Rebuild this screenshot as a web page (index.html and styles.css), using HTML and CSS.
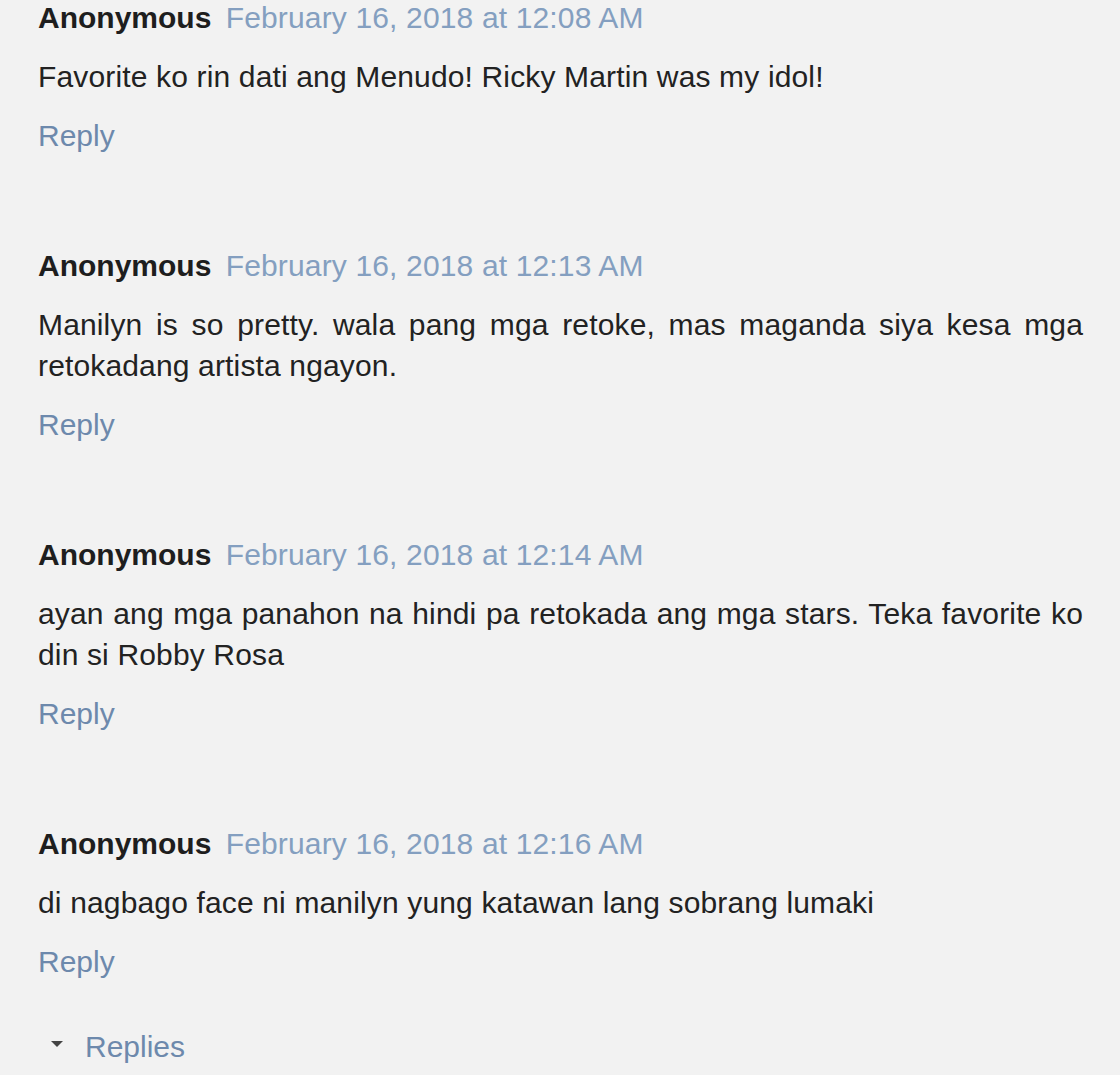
FILE: index.html
```html
<!DOCTYPE html>
<html>
<head>
<meta charset="utf-8">
<link rel="stylesheet" href="styles.css">
</head>
<body>
<div class="comments">
  <div class="comment">
    <div class="head"><span class="user">Anonymous</span> <span class="date">February 16, 2018 at 12:08 AM</span></div>
    <p class="body">Favorite ko rin dati ang Menudo! Ricky Martin was my idol!</p>
    <div class="reply">Reply</div>
  </div>
  <div class="comment">
    <div class="head"><span class="user">Anonymous</span> <span class="date">February 16, 2018 at 12:13 AM</span></div>
    <p class="body">Manilyn is so pretty. wala pang mga retoke, mas maganda siya kesa mga retokadang artista ngayon.</p>
    <div class="reply">Reply</div>
  </div>
  <div class="comment">
    <div class="head"><span class="user">Anonymous</span> <span class="date">February 16, 2018 at 12:14 AM</span></div>
    <p class="body">ayan ang mga panahon na hindi pa retokada ang mga stars. Teka favorite ko din si Robby Rosa</p>
    <div class="reply">Reply</div>
  </div>
  <div class="comment">
    <div class="head"><span class="user">Anonymous</span> <span class="date">February 16, 2018 at 12:16 AM</span></div>
    <p class="body">di nagbago face ni manilyn yung katawan lang sobrang lumaki</p>
    <div class="reply">Reply</div>
  </div>
  <div class="replies"><span class="tri"></span><span class="rlabel">Replies</span></div>
</div>
</body>
</html>
```
FILE: styles.css
```css
html, body {
  margin: 0;
  padding: 0;
  background: #f2f2f2;
}
body {
  font-family: "Liberation Sans", Arial, sans-serif;
  color: #222;
  width: 1120px;
  height: 1075px;
  overflow: hidden;
}
.comments {
  padding: 0 37px 0 38px;
  display: flex;
  flex-direction: column;
  gap: 92px;
}
.comment {
  display: flex;
  flex-direction: column;
}
.head {
  font-size: 30px;
  line-height: 36px;
  margin-bottom: 20px;
  white-space: nowrap;
}
.user {
  font-weight: bold;
  color: #1e1e1e;
}
.date {
  color: #849fc0;
  margin-left: 6px;
  letter-spacing: 0.15px;
}
.body {
  margin: 0 0 18px 0;
  font-size: 30px;
  line-height: 41px;
  letter-spacing: 0.15px;
  text-align: justify;
  color: #222;
}
.reply {
  font-size: 30px;
  line-height: 41px;
  color: #6d89ac;
}
.replies {
  margin-top: -48px;
  display: flex;
  align-items: center;
  font-size: 30px;
  line-height: 41px;
  color: #6d89ac;
  padding-left: 13px;
}
.tri {
  width: 0;
  height: 0;
  border-left: 6px solid transparent;
  border-right: 6px solid transparent;
  border-top: 6px solid #444;
  margin-right: 22px;
  margin-top: -6px;
}
```
